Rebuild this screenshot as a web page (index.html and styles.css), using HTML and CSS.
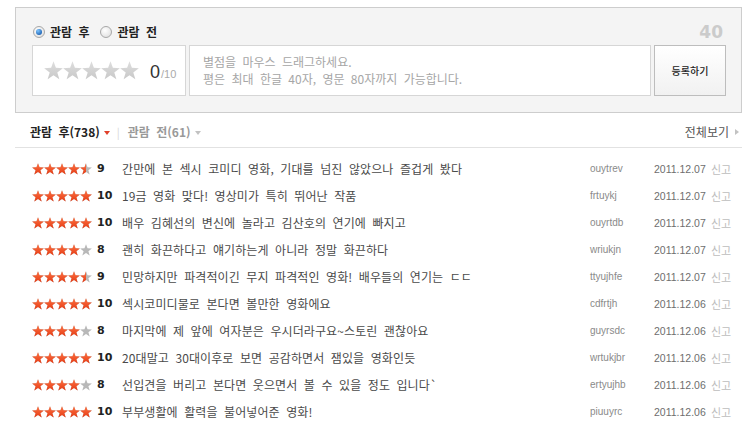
FILE: index.html
```html
<!DOCTYPE html>
<html lang="ko">
<head>
<meta charset="utf-8">
<title>관람평</title>
<link rel="stylesheet" href="styles.css">
</head>
<body>
<svg class="defs" width="0" height="0" aria-hidden="true">
  <defs>
    <linearGradient id="redg" x1="0" y1="0" x2="0" y2="1">
      <stop offset="0" stop-color="#ff7444"/>
      <stop offset="1" stop-color="#e43a14"/>
    </linearGradient>
    <linearGradient id="greyg" x1="0" y1="0" x2="0" y2="1">
      <stop offset="0" stop-color="#dedede"/>
      <stop offset="1" stop-color="#c8c8c8"/>
    </linearGradient>
    <path id="star" d="M6 .2L7.5 4.3L11.9 4.5L8.4 7.2L9.7 11.6L6 9L2.3 11.6L3.6 7.2L.1 4.5L4.5 4.3Z"/>
    <g id="five">
      <use href="#star"/>
      <use href="#star" x="12"/>
      <use href="#star" x="24"/>
      <use href="#star" x="36"/>
      <use href="#star" x="48"/>
    </g>
  </defs>
</svg>

<div class="wrap">
  <section class="panel">
    <div class="head">
      <label class="radio-label"><span class="radio on"></span>관람 후</label>
      <label class="radio-label second"><span class="radio"></span>관람 전</label>
      <span class="counter">40</span>
    </div>
    <div class="inputs">
      <div class="starbox">
        <svg class="bigstars" width="95" height="19" viewBox="0 0 60 12"><use href="#five" fill="url(#greyg)"/></svg>
        <span class="bigscore"><b>0</b><small>/10</small></span>
      </div>
      <div class="textarea">별점을 마우스 드래그하세요.<br>평은 최대 한글 40자, 영문 80자까지 가능합니다.</div>
      <div class="btn">등록하기</div>
    </div>
  </section>

  <nav class="tabs">
    <span class="tab active">관람 후(738)<i class="caret red"></i></span>
    <span class="sep">|</span>
    <span class="tab">관람 전(61)<i class="caret"></i></span>
    <span class="more">전체보기<i class="rcaret"></i></span>
  </nav>

  <ul class="list">
    <li class="row"><span class="rate"><svg class="rbg" width="60" height="12" viewBox="0 0 60 12"><use href="#five" fill="#b8b8b8"/></svg><span class="rfill" style="width:54px"><svg width="60" height="12" viewBox="0 0 60 12"><use href="#five" fill="url(#redg)"/></svg></span></span><b class="score">9</b><span class="text">간만에 본 섹시 코미디 영화, 기대를 넘진 않았으나 즐겁게 봤다</span><span class="user">ouytrev</span><span class="date">2011.12.07</span><span class="report">신고</span></li>
    <li class="row"><span class="rate"><svg class="rbg" width="60" height="12" viewBox="0 0 60 12"><use href="#five" fill="#b8b8b8"/></svg><span class="rfill" style="width:60px"><svg width="60" height="12" viewBox="0 0 60 12"><use href="#five" fill="url(#redg)"/></svg></span></span><b class="score">10</b><span class="text">19금 영화 맞다! 영상미가 특히 뛰어난 작품</span><span class="user">frtuykj</span><span class="date">2011.12.07</span><span class="report">신고</span></li>
    <li class="row"><span class="rate"><svg class="rbg" width="60" height="12" viewBox="0 0 60 12"><use href="#five" fill="#b8b8b8"/></svg><span class="rfill" style="width:60px"><svg width="60" height="12" viewBox="0 0 60 12"><use href="#five" fill="url(#redg)"/></svg></span></span><b class="score">10</b><span class="text">배우 김혜선의 변신에 놀라고 김산호의 연기에 빠지고</span><span class="user">ouyrtdb</span><span class="date">2011.12.07</span><span class="report">신고</span></li>
    <li class="row"><span class="rate"><svg class="rbg" width="60" height="12" viewBox="0 0 60 12"><use href="#five" fill="#b8b8b8"/></svg><span class="rfill" style="width:48px"><svg width="60" height="12" viewBox="0 0 60 12"><use href="#five" fill="url(#redg)"/></svg></span></span><b class="score">8</b><span class="text">괜히 화끈하다고 얘기하는게 아니라 정말 화끈하다</span><span class="user">wriukjn</span><span class="date">2011.12.07</span><span class="report">신고</span></li>
    <li class="row"><span class="rate"><svg class="rbg" width="60" height="12" viewBox="0 0 60 12"><use href="#five" fill="#b8b8b8"/></svg><span class="rfill" style="width:54px"><svg width="60" height="12" viewBox="0 0 60 12"><use href="#five" fill="url(#redg)"/></svg></span></span><b class="score">9</b><span class="text">민망하지만 파격적이긴 무지 파격적인 영화! 배우들의 연기는 ㄷㄷ</span><span class="user">ttyujhfe</span><span class="date">2011.12.07</span><span class="report">신고</span></li>
    <li class="row"><span class="rate"><svg class="rbg" width="60" height="12" viewBox="0 0 60 12"><use href="#five" fill="#b8b8b8"/></svg><span class="rfill" style="width:60px"><svg width="60" height="12" viewBox="0 0 60 12"><use href="#five" fill="url(#redg)"/></svg></span></span><b class="score">10</b><span class="text">섹시코미디물로 본다면 볼만한 영화에요</span><span class="user">cdfrtjh</span><span class="date">2011.12.06</span><span class="report">신고</span></li>
    <li class="row"><span class="rate"><svg class="rbg" width="60" height="12" viewBox="0 0 60 12"><use href="#five" fill="#b8b8b8"/></svg><span class="rfill" style="width:48px"><svg width="60" height="12" viewBox="0 0 60 12"><use href="#five" fill="url(#redg)"/></svg></span></span><b class="score">8</b><span class="text">마지막에 제 앞에 여자분은 우시더라구요~스토린 괜찮아요</span><span class="user">guyrsdc</span><span class="date">2011.12.06</span><span class="report">신고</span></li>
    <li class="row"><span class="rate"><svg class="rbg" width="60" height="12" viewBox="0 0 60 12"><use href="#five" fill="#b8b8b8"/></svg><span class="rfill" style="width:60px"><svg width="60" height="12" viewBox="0 0 60 12"><use href="#five" fill="url(#redg)"/></svg></span></span><b class="score">10</b><span class="text">20대말고 30대이후로 보면 공감하면서 잼있을 영화인듯</span><span class="user">wrtukjbr</span><span class="date">2011.12.06</span><span class="report">신고</span></li>
    <li class="row"><span class="rate"><svg class="rbg" width="60" height="12" viewBox="0 0 60 12"><use href="#five" fill="#b8b8b8"/></svg><span class="rfill" style="width:48px"><svg width="60" height="12" viewBox="0 0 60 12"><use href="#five" fill="url(#redg)"/></svg></span></span><b class="score">8</b><span class="text">선입견을 버리고 본다면 웃으면서 볼 수 있을 정도 입니다`</span><span class="user">ertyujhb</span><span class="date">2011.12.06</span><span class="report">신고</span></li>
    <li class="row"><span class="rate"><svg class="rbg" width="60" height="12" viewBox="0 0 60 12"><use href="#five" fill="#b8b8b8"/></svg><span class="rfill" style="width:60px"><svg width="60" height="12" viewBox="0 0 60 12"><use href="#five" fill="url(#redg)"/></svg></span></span><b class="score">10</b><span class="text">부부생활에 활력을 불어넣어준 영화!</span><span class="user">piuuyrc</span><span class="date">2011.12.06</span><span class="report">신고</span></li>
  </ul>
</div>
</body>
</html>
```

FILE: styles.css
```css
* { box-sizing: border-box; }
html, body { margin: 0; padding: 0; background: #fff; }
body {
  font-family: "Noto Sans CJK KR", "Noto Sans", sans-serif;
  font-size: 12px;
  color: #333;
  word-spacing: 3px;
}
.defs { position: absolute; width: 0; height: 0; overflow: hidden; }

.wrap { width: 727px; margin-left: 15px; padding-top: 7px; }

/* top panel */
.panel {
  border: 1px solid #cdcdcd;
  background: #f4f4f4;
  padding: 13px 15px 16px 16px;
}
.head { display: flex; align-items: center; height: 22px; margin-bottom: 2px; }
.radio-label {
  display: flex; align-items: center;
  font-weight: bold; font-size: 12px; line-height: 14px; color: #222;
}
.radio-label.second { margin-left: 10px; }
.radio {
  width: 12px; height: 12px; border-radius: 50%;
  border: 1px solid #a8a8a8;
  background: radial-gradient(circle at 40% 35%, #ffffff, #dadada);
  margin: 0 5px 0 1px;
  display: grid; place-items: center;
}
.radio.on::after {
  content: ""; width: 6px; height: 6px; border-radius: 50%;
  background: radial-gradient(circle at 35% 30%, #7cc4ff, #1a5fb0 80%);
}
.counter {
  margin-left: auto; margin-right: 3px;
  font-family: "DejaVu Sans", sans-serif; font-weight: bold;
  font-size: 17px; color: #cbcbcb; line-height: 20px;
}

.inputs { display: flex; gap: 3px; height: 51px; }
.starbox {
  width: 154px; border: 1px solid #d6d6d6; background: #fff;
  display: flex; align-items: center; padding-left: 11px;
}
.bigstars { display: block; }
.bigscore { margin-left: 11px; display: flex; align-items: baseline; padding-top: 4px; }
.bigscore b { font-family: "Liberation Sans", sans-serif; font-weight: normal; font-size: 18px; color: #333; }
.bigscore small { font-family: "Liberation Sans", sans-serif; font-size: 11px; color: #aaa; margin-left: 1px; }
.textarea {
  width: 462px; border: 1px solid #d6d6d6; background: #fff;
  padding: 7px 13px; font-size: 12px; line-height: 17px; color: #a6a6a6;
}
.btn {
  width: 72px; border: 1px solid #bdbdbd;
  background: linear-gradient(#ffffff, #f1f1f1);
  display: flex; align-items: center; justify-content: center;
  font-size: 10px; color: #222; font-weight: 500;
}

/* tabs */
.tabs {
  display: flex; align-items: center;
  padding: 12px 3px 8px 15px;
  border-bottom: 1px solid #e2e2e2;
  line-height: 14px;
}
.tab { font-size: 12px; color: #999; display: flex; align-items: center; font-weight: bold; }
.tab.active { color: #222; }
.caret {
  width: 0; height: 0; margin-left: 4px; margin-top: 1px;
  border-left: 3px solid transparent; border-right: 3px solid transparent;
  border-top: 4px solid #c2c2c2;
}
.caret.red { border-top-color: #e0402a; }
.sep { color: #d6d6d6; margin: 0 8px 0 7px; font-size: 11px; }
.more { margin-left: auto; font-size: 12px; color: #555; display: flex; align-items: center; word-spacing: 0; }
.rcaret {
  width: 0; height: 0; margin-left: 6px;
  border-top: 3px solid transparent; border-bottom: 3px solid transparent;
  border-left: 4px solid #c2c2c2;
}

/* list */
.list { list-style: none; margin: 0; padding: 7px 0 0 17px; }
.row {
  display: grid;
  grid-template-columns: 65px 25px 468px 64px 57px auto;
  align-items: center;
  height: 27px;
}
.rate { display: grid; width: 60px; height: 12px; }
.rate > * { grid-area: 1 / 1; }
.rbg { display: block; }
.rfill { overflow: hidden; height: 12px; }
.rfill svg { display: block; }
.score { font-family: "DejaVu Sans", sans-serif; font-size: 11px; font-weight: bold; color: #222; }
.text { font-size: 12px; color: #4a4a4a; line-height: 16px; white-space: nowrap; letter-spacing: 0.1px; }
.user { font-family: "Liberation Sans", sans-serif; font-size: 10px; color: #8a8a8a; }
.date { font-family: "Liberation Sans", sans-serif; font-size: 10.5px; color: #6e6e6e; }
.report { font-size: 11px; color: #bdbdbd; }
```
